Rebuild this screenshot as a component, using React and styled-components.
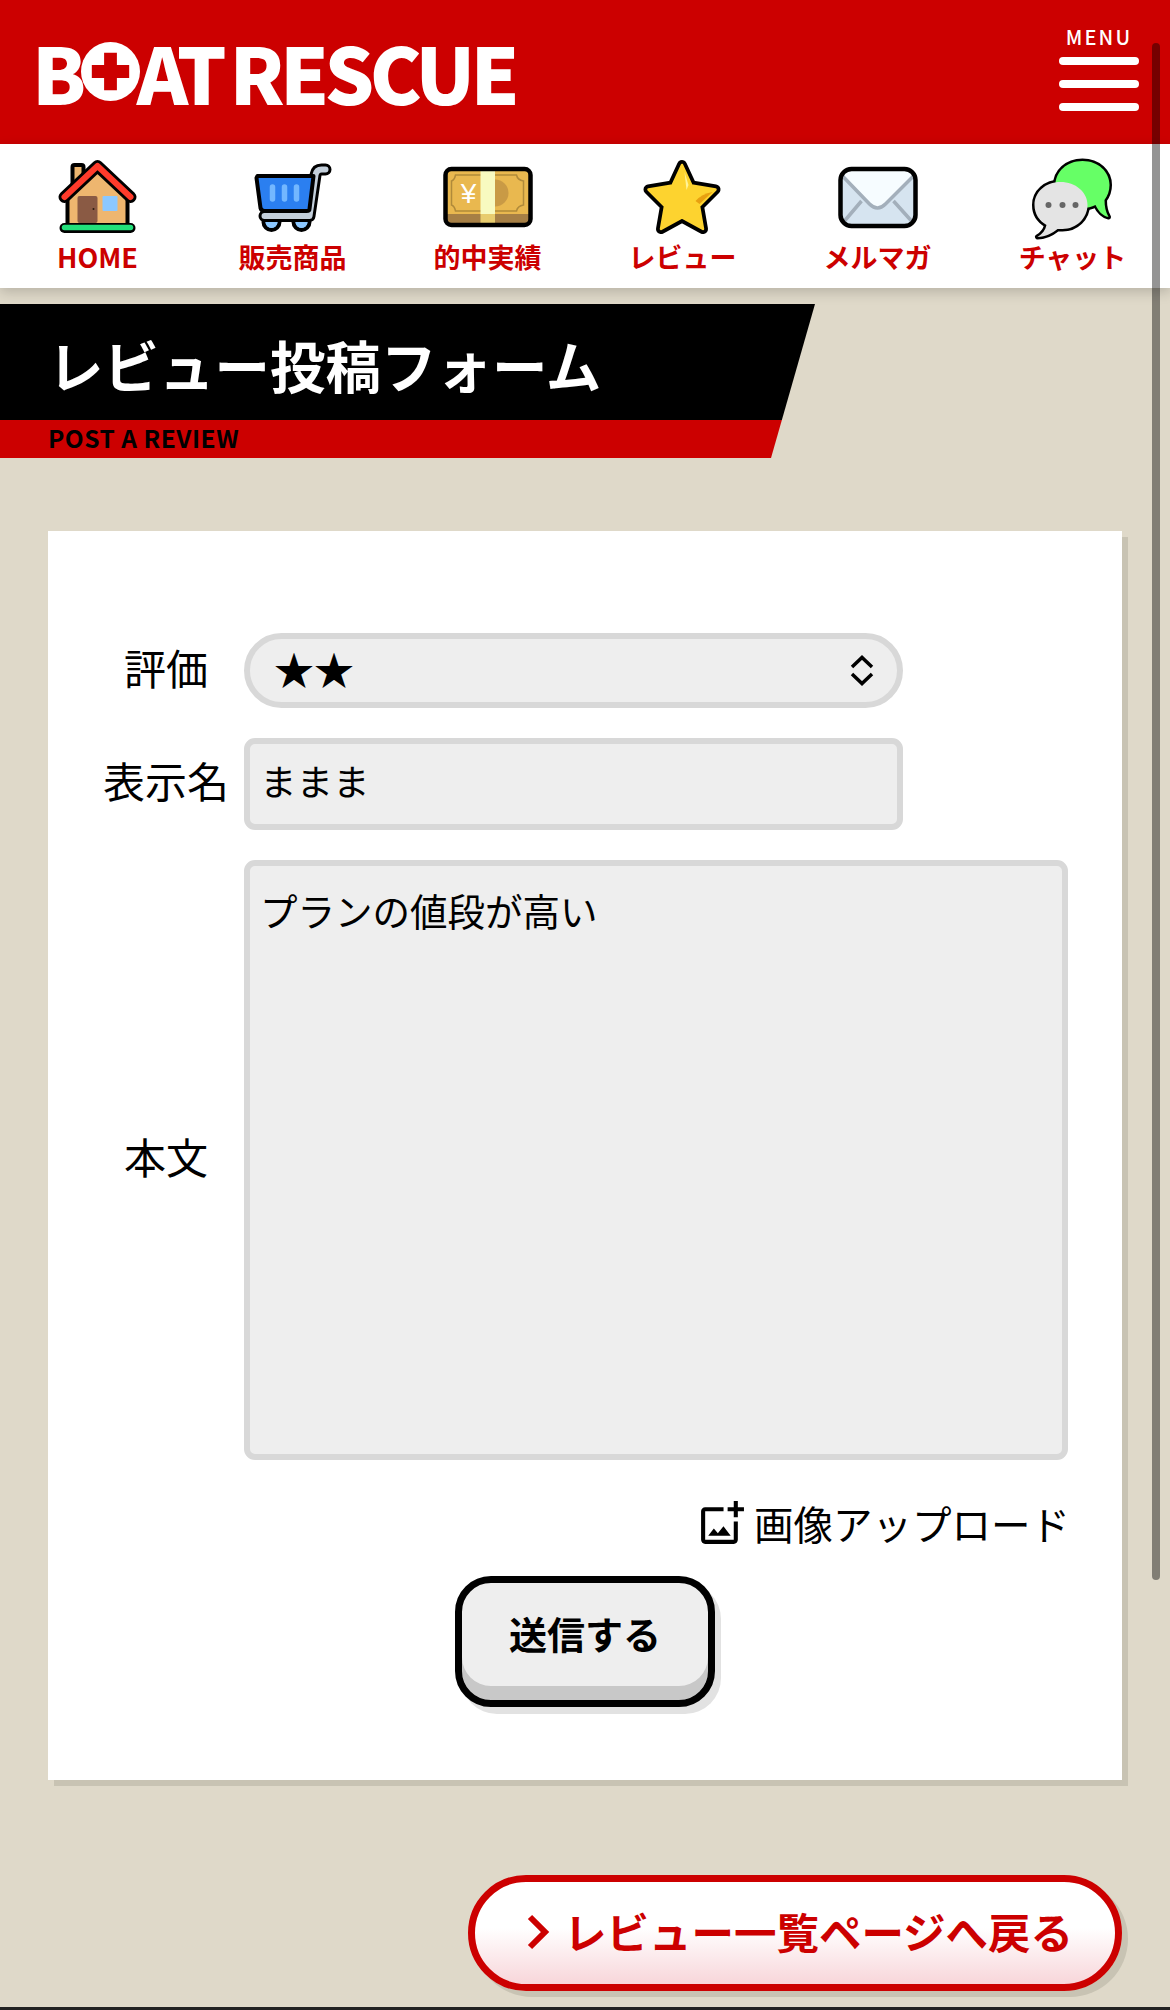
import React from 'react'
import styled, { createGlobalStyle } from 'styled-components'
import { MdOutlineAddPhotoAlternate } from 'react-icons/md'

const JP = '"Noto Sans CJK JP", "Noto Sans", sans-serif'
const RED = '#cc0000'

const GlobalStyle = createGlobalStyle`
  html, body { margin: 0; padding: 0; background: #dfd9c9; }
  body { font-family: ${JP}; color: #000; }
  * { box-sizing: border-box; }
`

const Page = styled.div`
  position: relative;
  width: 1170px;
  height: 2010px;
  overflow: hidden;
  background: #dfd9c9;
`

/* header */
const Header = styled.header`
  height: 144px;
  background: ${RED};
  display: flex;
  justify-content: space-between;
  padding: 26px 31px 0 32px;
`
const Logo = styled.div`
  display: flex;
  align-items: center;
  height: 96px;
  margin-top: -3px;
  color: #fff;
  font-family: "Noto Sans CJK JP", sans-serif;
  font-weight: 900;
  font-size: 78px;
  line-height: 96px;
  letter-spacing: -4.6px;
  word-spacing: -6px;
  white-space: nowrap;
`
const LogoMark = styled.svg`
  width: 59px;
  height: 59px;
  margin: 0 -3px 0 -1px;
  flex-shrink: 0;
`
const MenuButton = styled.div`
  width: 80px;
  display: flex;
  flex-direction: column;
  align-items: center;
  margin-top: -2px;
`
const MenuLabel = styled.div`
  color: #fff;
  font-size: 20px;
  line-height: 26px;
  font-weight: 500;
  letter-spacing: 2.2px;
  margin-bottom: 7px;
`
const MenuBar = styled.span`
  display: block;
  width: 80px;
  height: 8px;
  border-radius: 4px;
  background: #fff;
  margin-bottom: 15px;
`

/* nav */
const Nav = styled.nav`
  position: relative;
  height: 144px;
  background: #fff;
  display: grid;
  grid-template-columns: repeat(6, 195px);
  box-shadow: 0 4px 12px rgba(0, 0, 0, 0.18);
`
const NavItem = styled.a`
  display: flex;
  flex-direction: column;
  align-items: center;
  padding-top: 14px;
`
const NavIcon = styled.svg`
  width: 80px;
  height: 80px;
  overflow: visible;
`
const NavLabel = styled.span`
  color: ${RED};
  font-size: 27px;
  line-height: 38px;
  font-weight: 700;
  white-space: nowrap;
`

/* title */
const TitleBand = styled.div`
  width: 815px;
  margin-top: 16px;
  clip-path: polygon(0 0, 815px 0, 771px 154px, 0 154px);
`
const Title = styled.h1`
  margin: 0;
  height: 116px;
  background: #000;
  color: #fff;
  font-size: 55.5px;
  line-height: 121px;
  font-weight: 700;
  padding-left: 48px;
`
const SubTitle = styled.div`
  height: 38px;
  background: ${RED};
  color: #000;
  font-size: 24.5px;
  line-height: 36px;
  font-weight: 700;
  letter-spacing: 0.5px;
  padding-left: 48px;
`

/* form card */
const Card = styled.form`
  width: 1074px;
  height: 1249px;
  margin: 73px 0 0 48px;
  background: #fff;
  box-shadow: 6px 6px 0 #c8c3b3;
  padding: 102px 54px 0 40px;
`
const Row = styled.div`
  display: grid;
  grid-template-columns: 156px 1fr;
  align-items: center;
  margin-bottom: 30px;
`
const Label = styled.label`
  font-size: 42px;
  line-height: 60px;
  padding-bottom: 8px;
  text-align: center;
  white-space: nowrap;
`
const SelectWrap = styled.div`
  position: relative;
  width: 659px;
`
const Select = styled.select`
  display: block;
  width: 100%;
  height: 75px;
  appearance: none;
  border: 6px solid #d8d8d8;
  border-radius: 38px;
  background: #eeeeee;
  color: #000;
  font-family: ${JP};
  font-size: 40px;
  padding: 0 60px 8px 24px;
  outline: none;
`
const SelectArrows = styled.svg`
  position: absolute;
  right: 26px;
  top: 21px;
  width: 30px;
  height: 33px;
  pointer-events: none;
`
const Input = styled.input`
  display: block;
  width: 659px;
  height: 92px;
  border: 6px solid #d8d8d8;
  border-radius: 11px;
  background: #eeeeee;
  color: #000;
  font-family: ${JP};
  font-size: 36.5px;
  padding: 0 10px 7px;
  outline: none;
`
const TextArea = styled.textarea`
  display: block;
  width: 824px;
  height: 600px;
  border: 6px solid #d8d8d8;
  border-radius: 11px;
  background: #eeeeee;
  color: #000;
  font-family: ${JP};
  font-size: 37.5px;
  line-height: 54px;
  padding: 17px 10px;
  resize: none;
  outline: none;
`
const UploadRow = styled.div`
  display: flex;
  justify-content: flex-end;
  align-items: center;
  height: 60px;
  margin: 33px -2px 0 0;
`
const UploadLabel = styled.span`
  font-size: 39.5px;
  line-height: 60px;
  margin-left: 8px;
  white-space: nowrap;
`
const SubmitRow = styled.div`
  display: flex;
  margin-top: 23px;
  padding-left: 367px;
`
const Submit = styled.button`
  width: 260px;
  height: 131px;
  border: 7px solid #000;
  border-radius: 36px;
  background: #eeeeee;
  color: #000;
  font-family: ${JP};
  font-size: 38px;
  font-weight: 700;
  padding: 0 0 18px;
  box-shadow: inset 0 -14px 0 #c8c8c8, 6px 7px 0 #e2e2e2;
`

/* back link */
const BackRow = styled.div`
  display: flex;
  justify-content: flex-end;
  padding-right: 48px;
  margin-top: 95px;
`
const BackLink = styled.a`
  width: 654px;
  height: 116px;
  display: flex;
  align-items: center;
  justify-content: center;
  gap: 14px;
  border: 7px solid ${RED};
  border-radius: 58px;
  background: linear-gradient(#fff 45%, #f8d6da 100%);
  box-shadow: 6px 6px 0 #c8c3b3;
  color: ${RED};
  font-size: 42.5px;
  font-weight: 700;
  padding: 0 0 5px 9px;
  white-space: nowrap;
`
const Chevron = styled.svg`
  width: 24px;
  height: 36px;
  flex-shrink: 0;
  margin-top: 3px;
`
const BottomLine = styled.div`
  position: absolute;
  left: 0;
  right: 0;
  bottom: 0;
  height: 3px;
  background: #222;
`
const ScrollThumb = styled.div`
  position: absolute;
  left: 1152px;
  top: 43px;
  width: 8px;
  height: 1537px;
  border-radius: 4px;
  background: rgba(0, 0, 0, 0.42);
`

const HomeIcon = () => (
  <NavIcon viewBox="57.5 158 80 80">
    <rect x="72" y="165" width="11" height="30" rx="2" fill="#eeb66f" stroke="#000" strokeWidth="4" />
    <path d="M67 194 L97 168 L127 194 V228 H67 Z" fill="#eeb66f" stroke="#000" strokeWidth="4" />
    <path d="M64 197 L97 166 L130 197" fill="none" stroke="#000" strokeWidth="12" strokeLinecap="round" strokeLinejoin="round" />
    <path d="M64 197 L97 166 L130 197" fill="none" stroke="#ff3b2b" strokeWidth="6" strokeLinecap="round" strokeLinejoin="round" />
    <rect x="77" y="196" width="20" height="27" rx="2" fill="#8a5a44" />
    <circle cx="93" cy="209" r="1" fill="#2a1a10" />
    <rect x="102" y="196" width="15" height="15" rx="1" fill="#8cc8ff" />
    <path d="M64 228 H130" stroke="#000" strokeWidth="10" strokeLinecap="round" />
    <path d="M64 227.5 H130" stroke="#22e07a" strokeWidth="5.5" strokeLinecap="round" />
  </NavIcon>
)

const CartIcon = () => (
  <NavIcon viewBox="252.5 158 80 80">
    <circle cx="271" cy="222" r="8" fill="#8cc8ff" stroke="#000" strokeWidth="4" />
    <circle cx="301" cy="222" r="8" fill="#8cc8ff" stroke="#000" strokeWidth="4" />
    <path d="M325 169.5 H321 Q316 169.5 315 175 L309 216 H264" fill="none" stroke="#000" strokeWidth="12" strokeLinecap="round" strokeLinejoin="round" />
    <path d="M325 169.5 H321 Q316 169.5 315 175 L309 216 H264" fill="none" stroke="#c3cfdb" strokeWidth="6" strokeLinecap="round" strokeLinejoin="round" />
    <path d="M257 176 H313 L309 209 Q309 211 306 211 H264 Q261 211 260 208 L256 178 Z" fill="#2b7ff0" stroke="#000" strokeWidth="4" strokeLinejoin="round" />
    <path d="M272 187 V199 M284 187 V199 M296 187 V199" stroke="#73b7ff" strokeWidth="5.5" strokeLinecap="round" />
    <path d="M265 222 A6 6 0 0 0 277 222 Z M295 222 A6 6 0 0 0 307 222 Z" fill="#8cc8ff" />
  </NavIcon>
)

const MoneyIcon = () => (
  <NavIcon viewBox="447.5 158 80 80">
    <rect x="445" y="169" width="85" height="56" rx="6" fill="#e9b84f" />
    <path d="M445 214 H530 V219 Q530 225 524 225 H451 Q445 225 445 219 Z" fill="#a67f45" />
    <path d="M455 175 H516 Q517 180 523 181 V205 Q517 206 516 211 H455 Q454 206 451 205 V181 Q454 180 455 175 Z" fill="none" stroke="#b08a3a" strokeWidth="1.5" />
    <path d="M494.5 179.5 A13.5 13.5 0 0 1 494.5 206.5 Z" fill="#c99a45" />
    <rect x="480" y="169" width="14.5" height="45" fill="#f8fac0" />
    <rect x="480" y="214" width="14.5" height="11" fill="#e8cc6e" />
    <text x="468" y="203" fontFamily="Liberation Sans, sans-serif" fontSize="28" textAnchor="middle" fill="#fff">¥</text>
    <rect x="445" y="169" width="85" height="56" rx="6" fill="none" stroke="#000" strokeWidth="4.5" />
  </NavIcon>
)

const starPath = 'M681.5 165 L691 185.5 L715 189.5 L698.5 206 L702.5 229 L681.5 217.5 L660.5 229 L664.5 206 L648 189.5 L672 185.5 Z'

const StarIcon = () => (
  <NavIcon viewBox="642.5 158 80 80">
    <path d={starPath} fill="#000" stroke="#000" strokeWidth="10" strokeLinejoin="round" />
    <path d={starPath} fill="#fdd32f" stroke="#fdd32f" strokeWidth="2.5" strokeLinejoin="round" />
    <path d="M684 172 L688 185 L686 190 Z" fill="#fff39a" />
    <path d="M695 201 Q701 194 712 192 L699 204 Z" fill="#e8a010" />
  </NavIcon>
)

const MailIcon = () => (
  <NavIcon viewBox="837.5 158 80 80">
    <rect x="840" y="169" width="75" height="55" rx="10" fill="#d6e4f0" />
    <path d="M841 173 L868 204 Q877 212 886 204 L914 173 Q912 169 905 169 H850 Q843 169 841 173 Z" fill="#f6fcff" />
    <path d="M842 176 L869 204 Q877 212 885 204 L913 176" fill="none" stroke="#a3afbb" strokeWidth="3.5" />
    <path d="M861 201 L844 221 M893 201 L911 221" fill="none" stroke="#a3afbb" strokeWidth="3.5" />
    <rect x="840" y="169" width="75" height="57" rx="11" fill="none" stroke="#000" strokeWidth="4.5" />
  </NavIcon>
)

const greenBubble = 'M1082 161 C1066 161 1055 172 1055 185 C1055 198 1066 208 1082 208 C1087 208 1091 207 1095 205 C1098 211 1102 216 1108 217 C1105 212 1104 206 1104 200 C1107 196 1109 191 1109 185 C1109 172 1098 161 1082 161 Z'
const grayBubble = 'M1060 182 C1045 182 1034 192 1034 205 C1034 214 1039 221 1046 225 C1045 230 1042 234 1037 237 C1045 237 1052 233 1057 229 C1059 229 1060 229 1062 229 C1076 229 1087 218 1087 205 C1087 192 1075 182 1060 182 Z'

const ChatIcon = () => (
  <NavIcon viewBox="1032.5 158 80 80">
    <path d={greenBubble} fill="#000" stroke="#000" strokeWidth="5" strokeLinejoin="round" />
    <path d={grayBubble} fill="#000" stroke="#000" strokeWidth="5" strokeLinejoin="round" />
    <path d={greenBubble} fill="#66ff66" />
    <path d={grayBubble} fill="#e4e4e4" />
    <circle cx="1048" cy="205" r="3" fill="#666" />
    <circle cx="1062" cy="205" r="3" fill="#666" />
    <circle cx="1075" cy="205" r="3" fill="#666" />
  </NavIcon>
)

const navItems = [
  { label: 'HOME', Icon: HomeIcon },
  { label: '販売商品', Icon: CartIcon },
  { label: '的中実績', Icon: MoneyIcon },
  { label: 'レビュー', Icon: StarIcon },
  { label: 'メルマガ', Icon: MailIcon },
  { label: 'チャット', Icon: ChatIcon }
]

export default function App () {
  return (
    <Page>
      <GlobalStyle />
      <Header>
        <Logo>
          B
          <LogoMark viewBox="0 0 60 60">
            <circle cx="30" cy="30" r="30" fill="#fff" />
            <path d="M23.5 11 H36.5 V23.5 H49 V36.5 H36.5 V49 H23.5 V36.5 H11 V23.5 H23.5 Z" fill={RED} />
          </LogoMark>
          AT RESCUE
        </Logo>
        <MenuButton>
          <MenuLabel>MENU</MenuLabel>
          <MenuBar />
          <MenuBar />
          <MenuBar />
        </MenuButton>
      </Header>

      <Nav>
        {navItems.map(({ label, Icon }) => (
          <NavItem key={label}>
            <Icon />
            <NavLabel>{label}</NavLabel>
          </NavItem>
        ))}
      </Nav>

      <TitleBand>
        <Title>レビュー投稿フォーム</Title>
        <SubTitle>POST A REVIEW</SubTitle>
      </TitleBand>

      <Card onSubmit={e => e.preventDefault()}>
        <Row>
          <Label>評価</Label>
          <SelectWrap>
            <Select defaultValue="2">
              <option value="1">★</option>
              <option value="2">★★</option>
              <option value="3">★★★</option>
            </Select>
            <SelectArrows viewBox="0 0 30 33">
              <path d="M5 13 L15 3.5 L25 13 M5 20 L15 29.5 L25 20" fill="none" stroke="#000" strokeWidth="3.5" />
            </SelectArrows>
          </SelectWrap>
        </Row>
        <Row>
          <Label>表示名</Label>
          <Input readOnly value="ままま" />
        </Row>
        <Row>
          <Label>本文</Label>
          <TextArea readOnly value="プランの値段が高い" />
        </Row>
        <UploadRow>
          <MdOutlineAddPhotoAlternate size={49} />
          <UploadLabel>画像アップロード</UploadLabel>
        </UploadRow>
        <SubmitRow>
          <Submit type="submit">送信する</Submit>
        </SubmitRow>
      </Card>

      <BackRow>
        <BackLink>
          <Chevron viewBox="0 0 24 36">
            <path d="M4 3 L19 18 L4 33" fill="none" stroke={RED} strokeWidth="6" />
          </Chevron>
          レビュー一覧ページへ戻る
        </BackLink>
      </BackRow>

      <BottomLine />
      <ScrollThumb />
    </Page>
  )
}
